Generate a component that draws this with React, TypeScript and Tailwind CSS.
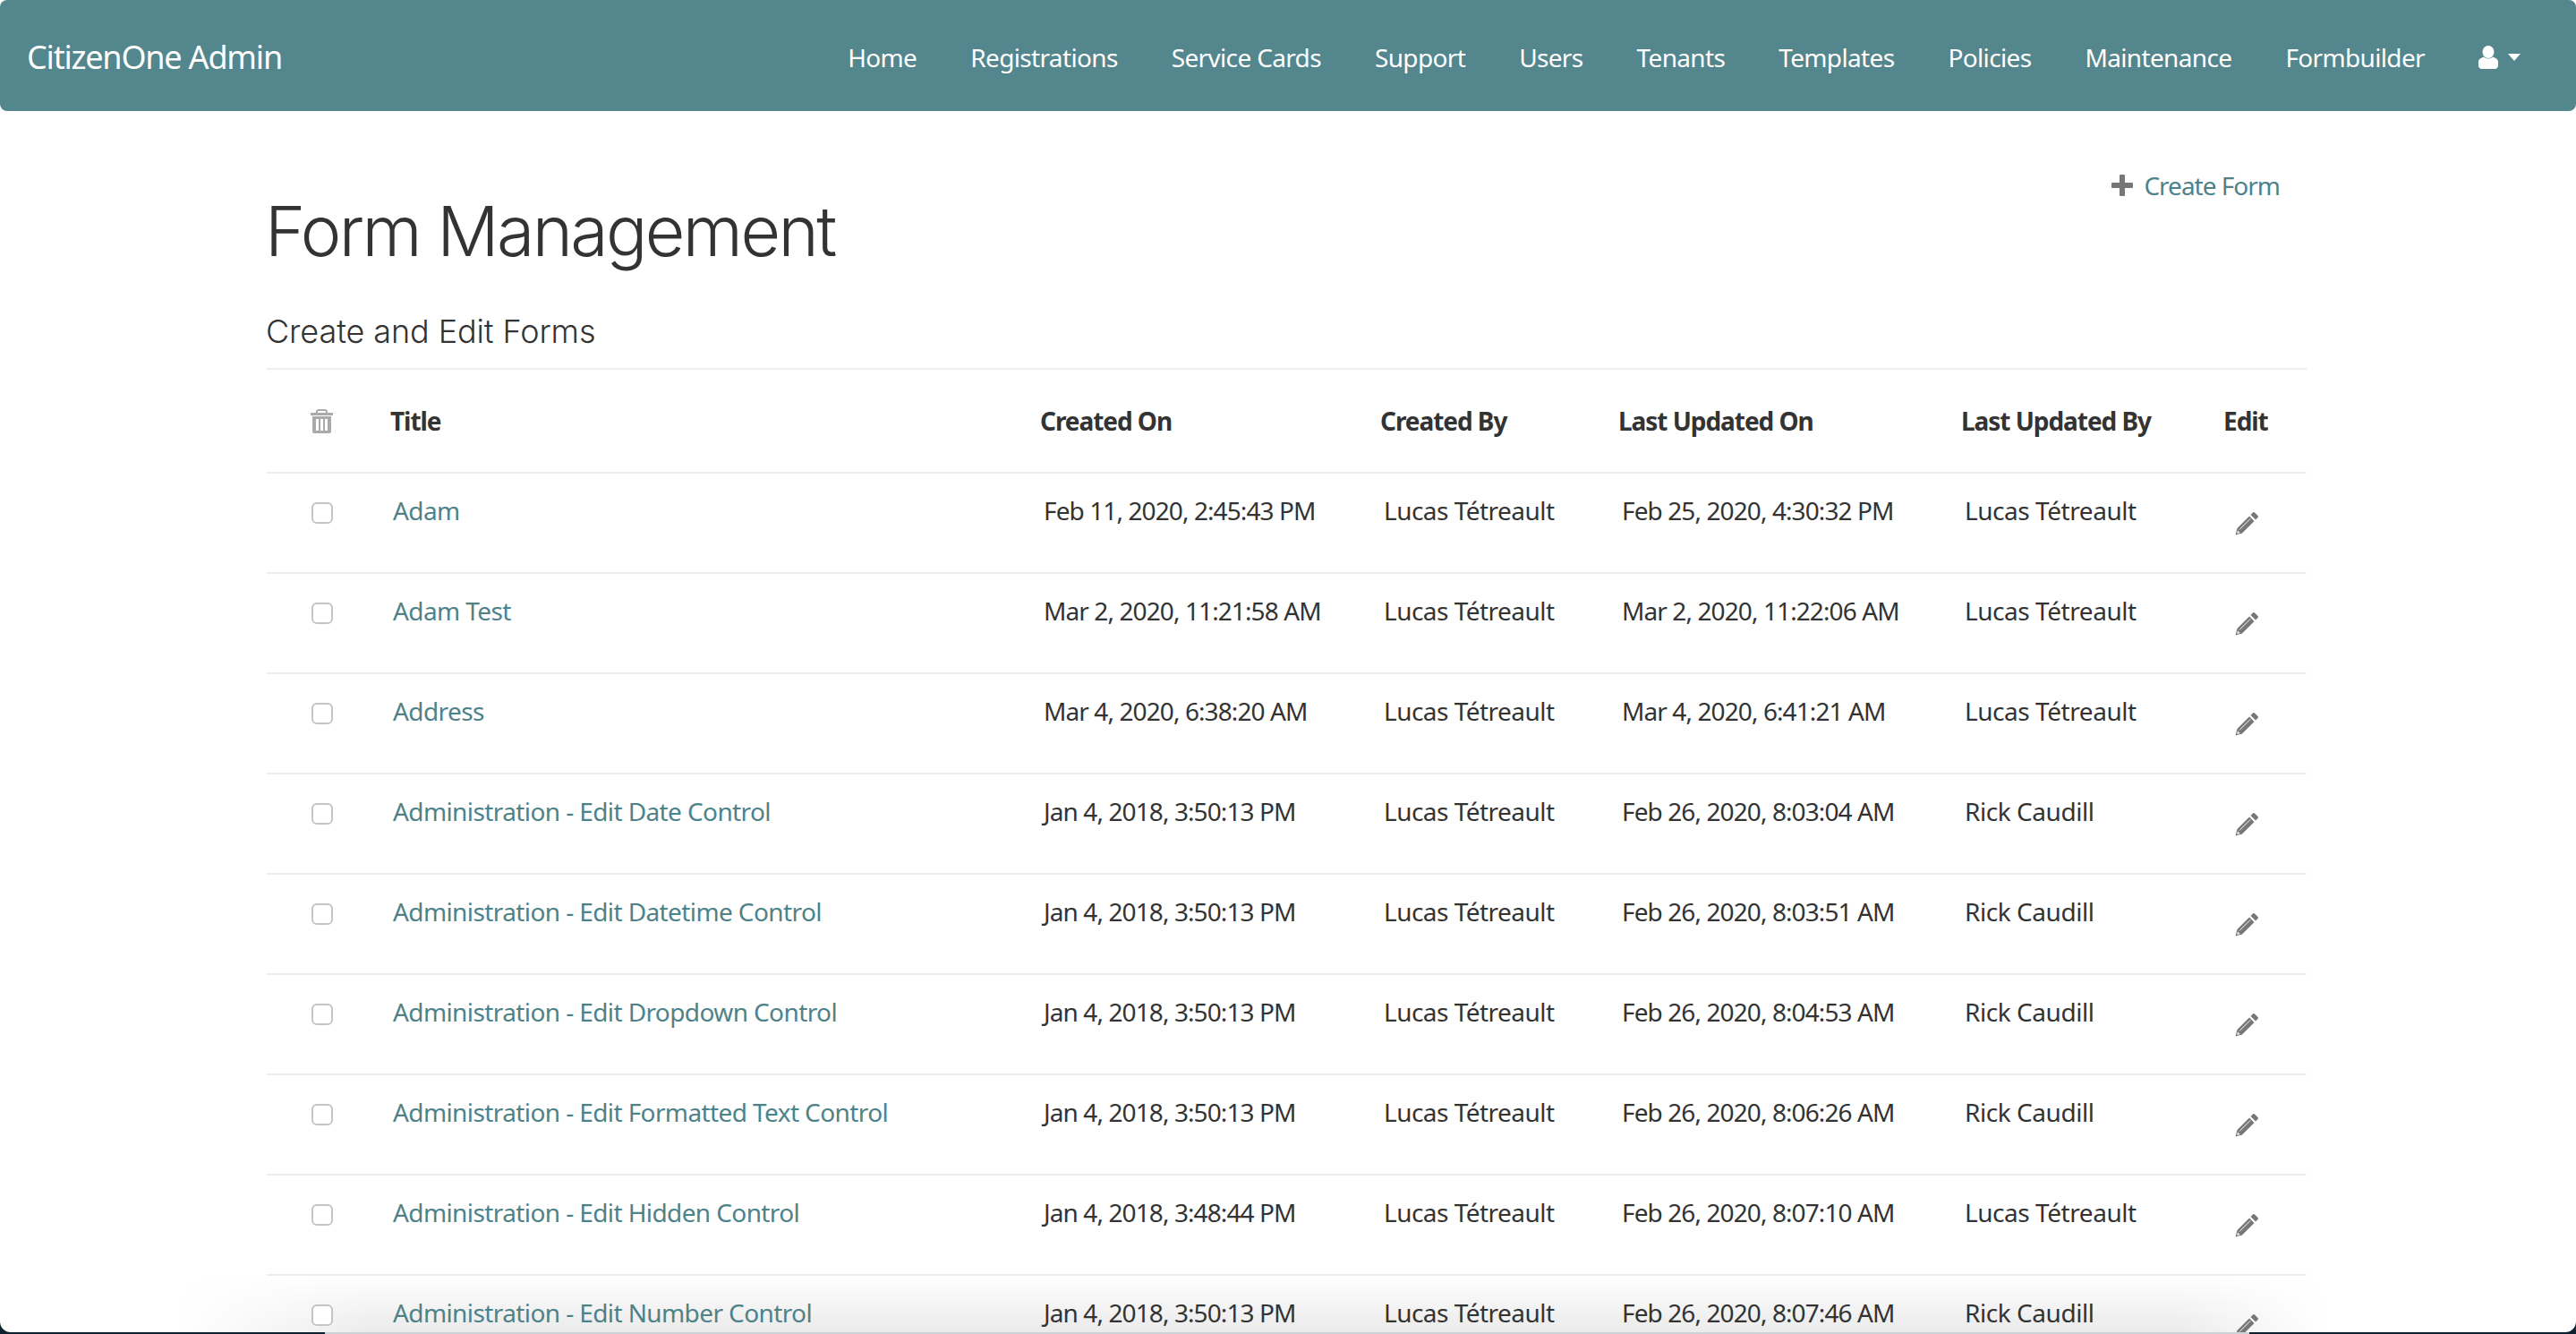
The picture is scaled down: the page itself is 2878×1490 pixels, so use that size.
const BODY = '"Noto Sans", sans-serif';

const navItems = ['Home', 'Registrations', 'Service Cards', 'Support', 'Users', 'Tenants', 'Templates', 'Policies', 'Maintenance', 'Formbuilder'];

const rows = [
  ['Adam', 'Feb 11, 2020, 2:45:43 PM', 'Lucas Tétreault', 'Feb 25, 2020, 4:30:32 PM', 'Lucas Tétreault'],
  ['Adam Test', 'Mar 2, 2020, 11:21:58 AM', 'Lucas Tétreault', 'Mar 2, 2020, 11:22:06 AM', 'Lucas Tétreault'],
  ['Address', 'Mar 4, 2020, 6:38:20 AM', 'Lucas Tétreault', 'Mar 4, 2020, 6:41:21 AM', 'Lucas Tétreault'],
  ['Administration - Edit Date Control', 'Jan 4, 2018, 3:50:13 PM', 'Lucas Tétreault', 'Feb 26, 2020, 8:03:04 AM', 'Rick Caudill'],
  ['Administration - Edit Datetime Control', 'Jan 4, 2018, 3:50:13 PM', 'Lucas Tétreault', 'Feb 26, 2020, 8:03:51 AM', 'Rick Caudill'],
  ['Administration - Edit Dropdown Control', 'Jan 4, 2018, 3:50:13 PM', 'Lucas Tétreault', 'Feb 26, 2020, 8:04:53 AM', 'Rick Caudill'],
  ['Administration - Edit Formatted Text Control', 'Jan 4, 2018, 3:50:13 PM', 'Lucas Tétreault', 'Feb 26, 2020, 8:06:26 AM', 'Rick Caudill'],
  ['Administration - Edit Hidden Control', 'Jan 4, 2018, 3:48:44 PM', 'Lucas Tétreault', 'Feb 26, 2020, 8:07:10 AM', 'Lucas Tétreault'],
  ['Administration - Edit Number Control', 'Jan 4, 2018, 3:50:13 PM', 'Lucas Tétreault', 'Feb 26, 2020, 8:07:46 AM', 'Rick Caudill'],
];

function Pencil() {
  return (
    <svg viewBox="0 0 26 26" className="w-[26px] h-[26px] block" fill="#777">
      <path d="M20 0.5 a1.5 1.5 0 0 1 2 0 L25.5 4 a1.5 1.5 0 0 1 0 2 L23 8.5 L17.5 3 Z" />
      <path d="M16 4.5 L21.5 10 L8 23.5 L0.5 25.5 L2.5 18 Z" />
      <path d="M5 19.5 L17 7.5" stroke="#fff" strokeWidth="1" fill="none" />
      <path d="M3 20.5 L5.5 23 L2.2 24 Z" fill="#fff" />
    </svg>
  );
}

function Trash() {
  return (
    <svg viewBox="0 0 25 27" className="w-[25px] h-[27px] block" fill="#aaa">
      <path fillRule="evenodd" d="M9 0h7a3 3 0 0 1 3 3v1h6v3H0V4h6V3a3 3 0 0 1 3-3zm0 2a1 1 0 0 0-1 1v1h9V3a1 1 0 0 0-1-1z" />
      <path fillRule="evenodd" d="M2 8h21v17a2 2 0 0 1-2 2H4a2 2 0 0 1-2-2zm4 3v13h3V11zm5 0v13h3V11zm5 0v13h3V11z" />
    </svg>
  );
}

function User() {
  return (
    <svg viewBox="0 0 22 26" className="w-[22px] h-[26px] block" fill="#fff">
      <ellipse cx="11" cy="7" rx="6.5" ry="7" />
      <path d="M6 12.5 C3 14 0 14.5 0 18.5 V22 C0 24.5 1.5 26 4 26 H18 C20.5 26 22 24.5 22 22 V18.5 C22 14.5 19 14 16 12.5 C14 15 8 15 6 12.5 Z" />
    </svg>
  );
}

function Plus() {
  return (
    <svg viewBox="0 0 24 24" className="w-[24px] h-[24px] block" fill="#777">
      <path d="M9 1 a1 1 0 0 1 1-1 h4 a1 1 0 0 1 1 1 v8 h8 a1 1 0 0 1 1 1 v4 a1 1 0 0 1-1 1 h-8 v8 a1 1 0 0 1-1 1 h-4 a1 1 0 0 1-1-1 v-8 h-8 a1 1 0 0 1-1-1 v-4 a1 1 0 0 1 1-1 h8 z" />
    </svg>
  );
}

export default function App() {
  return (
    <div className="relative w-full h-[1490px] overflow-hidden bg-[#10202c]" style={{ fontFamily: BODY }}>
      <div className="relative h-[1488px] bg-white rounded-b-[12px] overflow-hidden">
        <div className="absolute left-[200px] w-[2400px] bottom-0 h-[66px] bg-gradient-to-t from-[#ebebeb] to-transparent [mask-image:linear-gradient(to_right,transparent,black_9%,black_93%,transparent)]" />
        <nav className="relative h-[124px] bg-[#53868d] rounded-[8px] flex items-center justify-between pl-[30px] pr-[62px] pt-[3px] text-white">
          <a className="text-[36px] tracking-[-1.2px] leading-none">CitizenOne Admin</a>
          <div className="flex items-center gap-[60px] text-[28px] tracking-[-0.65px] leading-none">
            {navItems.map((n) => (
              <a key={n}>{n}</a>
            ))}
            <span className="flex items-center gap-[11px]">
              <User />
              <span className="block w-0 h-0 border-x-[7.5px] border-x-transparent border-t-[8px] border-t-white" />
            </span>
          </div>
        </nav>

        <div className="relative ml-[298px] w-[2279px]">
          <a className="absolute right-[30px] top-[69px] flex items-center gap-[12px] text-[28px] tracking-[-1px] text-[#4e8289] leading-none">
            <Plus />
            <span>Create Form</span>
          </a>
          <h1 className="pt-[92px] -ml-[2px] text-[77px] leading-[84px] font-light tracking-[-2.6px] text-[#333]" style={{ fontFamily: 'Inter, "Liberation Sans", sans-serif' }}>
            Form Management
          </h1>
          <h2 className="mt-[48px] -ml-[1px] text-[36px] leading-[44px] pb-[19px] font-light tracking-[-0.1px] text-[#333]" style={{ fontFamily: 'Inter, "Liberation Sans", sans-serif' }}>
            Create and Edit Forms
          </h2>
          <table className="w-full table-fixed border-t-2 border-[#eeeeee] text-[#333] text-[28px]">
            <colgroup>
              <col className="w-[138px]" />
              <col className="w-[726px]" />
              <col className="w-[380px]" />
              <col className="w-[266px]" />
              <col className="w-[383px]" />
              <col className="w-[293px]" />
              <col className="w-[93px]" />
            </colgroup>
            <thead>
              <tr className="h-[116px] border-b-2 border-[#eeeeee] font-bold text-left tracking-[-1.05px]">
                <th className="pl-[49px] align-middle">
                  <Trash />
                </th>
                <th>Title</th>
                <th>Created On</th>
                <th>Created By</th>
                <th>Last Updated On</th>
                <th>Last Updated By</th>
                <th>Edit</th>
              </tr>
            </thead>
            <tbody>
              {rows.map((r) => (
                <tr key={r[0]} className="h-[112px] border-b-2 border-[#eeeeee] align-top">
                  <td className="pl-[50px] pt-[32px]">
                    <span className="block w-[24px] h-[24px] rounded-[6px] border-2 border-[#c4c4c4] bg-white" />
                  </td>
                  <td className="pl-[3px] pt-[20px] text-[#4e8289] tracking-[-0.6px]">{r[0]}</td>
                  <td className="pl-[4px] pt-[20px] tracking-[-0.9px]">{r[1]}</td>
                  <td className="pl-[4px] pt-[20px] tracking-[-0.53px]">{r[2]}</td>
                  <td className="pl-[4px] pt-[20px] tracking-[-0.9px]">{r[3]}</td>
                  <td className="pl-[4px] pt-[20px] tracking-[-0.45px]">{r[4]}</td>
                  <td className="pl-[13px] pt-[43px]">
                    <Pencil />
                  </td>
                </tr>
              ))}
            </tbody>
          </table>
        </div>
      </div>
      <div className="absolute left-[363px] right-[365px] bottom-0 h-[2px] bg-[#ccd2d6]" />
    </div>
  );
}
